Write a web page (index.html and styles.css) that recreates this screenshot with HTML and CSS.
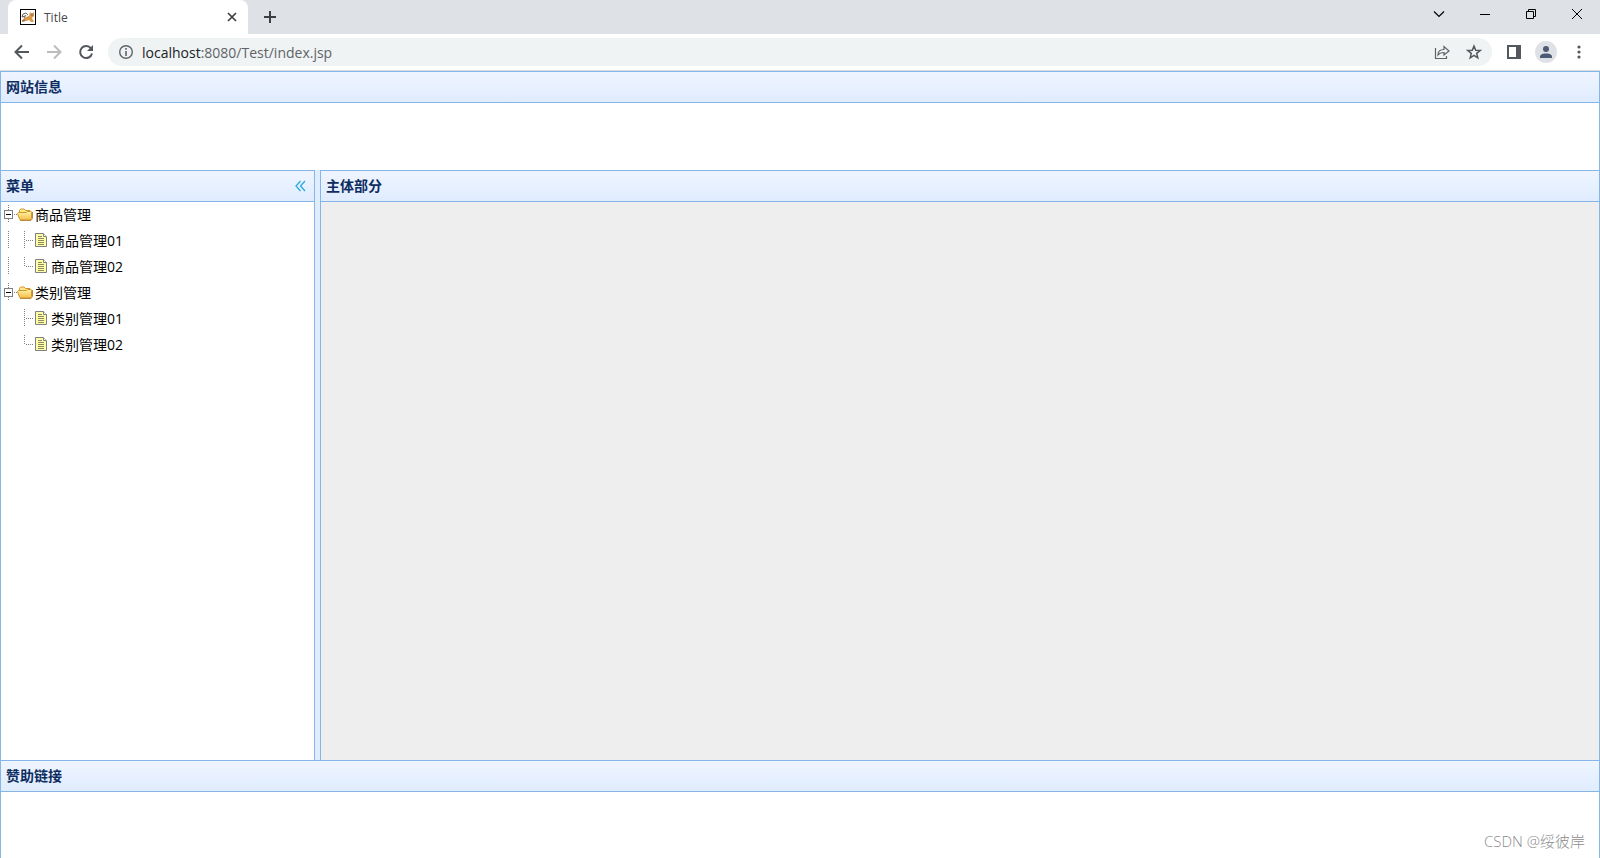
FILE: index.html
```html
<!DOCTYPE html>
<html lang="zh">
<head>
<meta charset="utf-8">
<title>Title</title>
<link rel="stylesheet" href="styles.css">
</head>
<body>
<svg class="defs" aria-hidden="true">
  <defs>
    <linearGradient id="gold" x1="0" y1="0" x2="0" y2="1"><stop offset="0" stop-color="#fff6a8"/><stop offset="1" stop-color="#f6bc48"/></linearGradient>
    <symbol id="expander" viewBox="0 0 16 18">
      <path d="M7.500 0v5M7.500 14v4M13 9.500h3" stroke="#808080" stroke-dasharray="1 1" fill="none"/>
      <rect x="3.500" y="5.500" width="8" height="8" fill="#fff" stroke="#808080"/>
      <path d="M5 9.500h5" stroke="#000"/>
    </symbol>
    <symbol id="line" viewBox="0 0 16 18"><path d="M7.500 0v18" stroke="#808080" stroke-dasharray="1 1"/></symbol>
    <symbol id="join" viewBox="0 0 16 18"><path d="M7.500 0v18M9 9.500h7" stroke="#808080" stroke-dasharray="1 1"/></symbol>
    <symbol id="elbow" viewBox="0 0 16 18"><path d="M7.500 0v10M9 9.500h7" stroke="#808080" stroke-dasharray="1 1"/></symbol>
    <symbol id="folder" viewBox="0 0 16 18">
      <path d="M2.500 13V5.500l1-1.500h3.500l1.500 1.500h4.500l1 1V13z" fill="#ffe98a" stroke="#d0962e"/>
      <path d="M.5 8.500l1-1h8l1-1h3l1 1v6l-1 1.500h-10l-1-1z" fill="url(#gold)" stroke="#d0962e"/>
      <path d="M3 15.500h11l1.500-2V7" fill="none" stroke="#b98a3c"/>
    </symbol>
    <symbol id="file" viewBox="0 0 16 18">
      <path d="M2.500 2.500h8l3 3v10h-11z" fill="#ffffa8" stroke="#808080"/>
      <path d="M10.500 2.500v3h3" fill="#fff" stroke="#808080"/>
      <path d="M5 5.500h4M5 7.500h6M5 9.500h6M5 11.500h6M5 13.500h6" stroke="#8f8b60"/>
    </symbol>
  </defs>
</svg>
<div class="window">
  <header class="tabstrip">
    <div class="tab">
      <svg class="favicon" viewBox="0 0 16 16"><rect x=".5" y=".5" width="15" height="15" fill="#fff" stroke="#000"/><path d="M3 10l3-2 3-1 1-4 1 1h2l1-1v4l-2 2 1 2 1 2h-3l-2-2-3 1-3 1H2z" fill="#d99a4c"/><path d="M2 8l1-3 3-1 2 2M2 8l3-1M6 6l-2 3M2 12l3-1M11 6h2" stroke="#6b6459" fill="none"/></svg>
      <span class="tab-title">Title</span>
      <button class="icon-btn" aria-label="Close tab"><svg width="16" height="16" viewBox="0 0 16 16"><path d="M4 4l8 8M12 4l-8 8" stroke="#3c4043" stroke-width="1.700"/></svg></button>
    </div>
    <button class="icon-btn new-tab" aria-label="New tab"><svg width="16" height="16" viewBox="0 0 16 16"><path d="M8 2v12M2 8h12" stroke="#3c4043" stroke-width="2"/></svg></button>
    <div class="window-controls">
      <button class="icon-btn" aria-label="Search tabs"><svg width="12" height="12" viewBox="0 0 12 12"><path d="M1 3.500l5 5 5-5" fill="none" stroke="#000" stroke-width="1.200"/></svg></button>
      <button class="icon-btn" aria-label="Minimize"><svg width="12" height="12" viewBox="0 0 12 12"><path d="M1 6.500h10" stroke="#000"/></svg></button>
      <button class="icon-btn" aria-label="Restore"><svg width="12" height="12" viewBox="0 0 12 12"><path d="M1.500 3.500h7v7h-7zM3.500 3V1.500h7v7H9" fill="none" stroke="#000"/></svg></button>
      <button class="icon-btn" aria-label="Close"><svg width="12" height="12" viewBox="0 0 12 12"><path d="M1 1l10 10M11 1L1 11" stroke="#000"/></svg></button>
    </div>
  </header>
  <nav class="toolbar">
    <button class="icon-btn" aria-label="Back"><svg width="16" height="16" viewBox="0 0 16 16"><path d="M15 8H2M8 1.500L1.500 8 8 14.500" fill="none" stroke="#54585d" stroke-width="2"/></svg></button>
    <button class="icon-btn" aria-label="Forward"><svg width="16" height="16" viewBox="0 0 16 16"><path d="M1 8h13M8 1.500L14.500 8 8 14.500" fill="none" stroke="#babcbe" stroke-width="2"/></svg></button>
    <button class="icon-btn" aria-label="Reload"><svg width="16" height="16" viewBox="0 0 16 16"><path d="M13 4.500A6 6 0 1 0 14 9.500" fill="none" stroke="#54585d" stroke-width="2"/><path d="M15 1v6H9z" fill="#54585d"/></svg></button>
    <div class="omnibox">
      <svg width="16" height="16" viewBox="0 0 16 16"><circle cx="8" cy="8" r="6.300" fill="none" stroke="#5f6368" stroke-width="1.400"/><path d="M8 7v5M8 4v1.700" stroke="#5f6368" stroke-width="1.600"/></svg>
      <a class="url" href="#"><span class="host">localhost</span>:8080/Test/index.jsp</a>
      <button class="icon-btn" aria-label="Share"><svg width="16" height="16" viewBox="0 0 16 16"><path d="M1.500 4v10.500h11V12" fill="none" stroke="#5f6368" stroke-width="1.200"/><path d="M4 11c0-4 2-5.500 6-5.500V2.500L15 7l-5 4V8.500c-3 0-4.500.5-6 2.500z" fill="none" stroke="#5f6368" stroke-width="1.200"/></svg></button>
      <button class="icon-btn" aria-label="Bookmark"><svg width="16" height="16" viewBox="0 0 16 16"><path d="M8 2l1.700 4.200 4.500.3-3.500 2.900 1.100 4.400L8 11.400l-3.800 2.400 1.100-4.400-3.500-2.900 4.500-.3z" fill="none" stroke="#54585d" stroke-width="1.500"/></svg></button>
    </div>
    <button class="icon-btn" aria-label="Side panel"><svg width="14" height="14" viewBox="0 0 14 14"><path d="M0 0h14v14H0z" fill="#54585d"/><path d="M2 2h7v10H2z" fill="#fff"/></svg></button>
    <button class="icon-btn avatar" aria-label="Profile"><svg width="14" height="14" viewBox="0 0 14 14"><circle cx="7" cy="4" r="3" fill="#4c5c75"/><path d="M1 13v-1.500C1 9 5 8.500 7 8.500s6 .5 6 3V13z" fill="#4c5c75"/></svg></button>
    <button class="icon-btn" aria-label="Menu"><svg width="16" height="16" viewBox="0 0 16 16"><circle cx="8" cy="3" r="1.600" fill="#54585d"/><circle cx="8" cy="8" r="1.600" fill="#54585d"/><circle cx="8" cy="13" r="1.600" fill="#54585d"/></svg></button>
  </nav>
  <div class="layout">
    <section class="north"><h2 class="panel-title">网站信息</h2></section>
    <div class="middle">
      <aside class="west">
        <h2 class="panel-title">菜单<button class="icon-btn collapse" aria-label="Collapse"><svg width="16" height="16" viewBox="0 0 16 16"><path d="M7.500 3L3 8l4.500 5M12 3L7.500 8l4.500 5" fill="none" stroke="#2aabdf" stroke-width="1.300"/></svg></button></h2>
        <ul class="tree">
          <li class="node"><svg><use href="#expander"/></svg><svg><use href="#folder"/></svg><span>商品管理</span></li>
          <li class="node"><svg><use href="#line"/></svg><svg><use href="#join"/></svg><svg><use href="#file"/></svg><span>商品管理01</span></li>
          <li class="node"><svg><use href="#line"/></svg><svg><use href="#elbow"/></svg><svg><use href="#file"/></svg><span>商品管理02</span></li>
          <li class="node"><svg><use href="#expander"/></svg><svg><use href="#folder"/></svg><span>类别管理</span></li>
          <li class="node"><svg></svg><svg><use href="#join"/></svg><svg><use href="#file"/></svg><span>类别管理01</span></li>
          <li class="node"><svg></svg><svg><use href="#elbow"/></svg><svg><use href="#file"/></svg><span>类别管理02</span></li>
        </ul>
      </aside>
      <main class="center"><h2 class="panel-title">主体部分</h2></main>
    </div>
    <section class="south"><h2 class="panel-title">赞助链接</h2></section>
  </div>
  <div class="watermark">CSDN @绥彼岸</div>
</div>
</body>
</html>
```

FILE: styles.css
```css
* { box-sizing: border-box; }
body { margin: 0; font-family: "Open Sans", "Noto Sans CJK SC", sans-serif; font-size: 14px; color: #000; }
.defs { position: absolute; width: 0; height: 0; }
.window { position: relative; display: flex; flex-direction: column; height: 100vh; overflow: hidden; }
.icon-btn { display: flex; align-items: center; justify-content: center; flex: none; padding: 0; border: 0; background: none; }

.tabstrip { display: flex; flex: none; height: 34px; background: #dee1e6; padding-left: 8px; }
.tab { display: flex; align-items: center; gap: 8px; width: 240px; padding: 0 8px 0 12px; background: #fff; border-radius: 8px 8px 0 0; }
.favicon { width: 16px; height: 16px; }
.tab-title { flex: 1; font-size: 12px; color: #45484c; }
.new-tab { margin-left: 14px; }
.window-controls { display: flex; margin-left: auto; height: 28px; }
.window-controls .icon-btn { width: 46px; }

.toolbar { display: flex; flex: none; align-items: center; gap: 16px; height: 37px; padding: 0 13px 0 14px; border-bottom: 1px solid #dadce0; background: #fff; }
.omnibox { display: flex; flex: 1; align-items: center; gap: 8px; height: 28px; margin: 0 -1px 0 -2px; padding: 0 10px; border-radius: 14px; background: #eff3f4; }
.omnibox .icon-btn { margin-left: 8px; }
.url { flex: 1; color: #5f6368; text-decoration: none; }
.host { color: #202124; }
.avatar { width: 22px; height: 22px; margin: 0 -2px; border-radius: 50%; background: #dee1e6; }

.layout { display: flex; flex: 1; flex-direction: column; min-height: 0; border: solid #86b6e8; border-width: 0 1px; background: #e0edff; }
.panel-title { display: flex; flex: none; align-items: center; height: 32px; margin: 0; padding: 0 5px; border: solid #86b6e8; border-width: 1px 0; background: linear-gradient(#eff5ff, #dfecff); font-size: 14px; line-height: 20px; color: #0e2d5f; }
.north { flex: none; height: 99px; background: #fff; }
.south { flex: none; height: 98px; background: #fff; }
.middle { display: flex; flex: 1; gap: 5px; min-height: 0; }
.west { width: 314px; border-right: 1px solid #86b6e8; background: #fff; }
.center { flex: 1; border-left: 1px solid #86b6e8; background: #eee; }
.collapse { margin-left: auto; }
.tree { margin: 0; padding: 0; list-style: none; }
.node { display: flex; align-items: center; height: 26px; padding-bottom: 2px; }
.node svg { flex: none; width: 16px; height: 18px; }
.node span { padding-left: 2px; }
.watermark { position: absolute; right: 15px; bottom: 7px; font-size: 15px; font-weight: 300; line-height: 20px; color: #8c8c8c; }
```
